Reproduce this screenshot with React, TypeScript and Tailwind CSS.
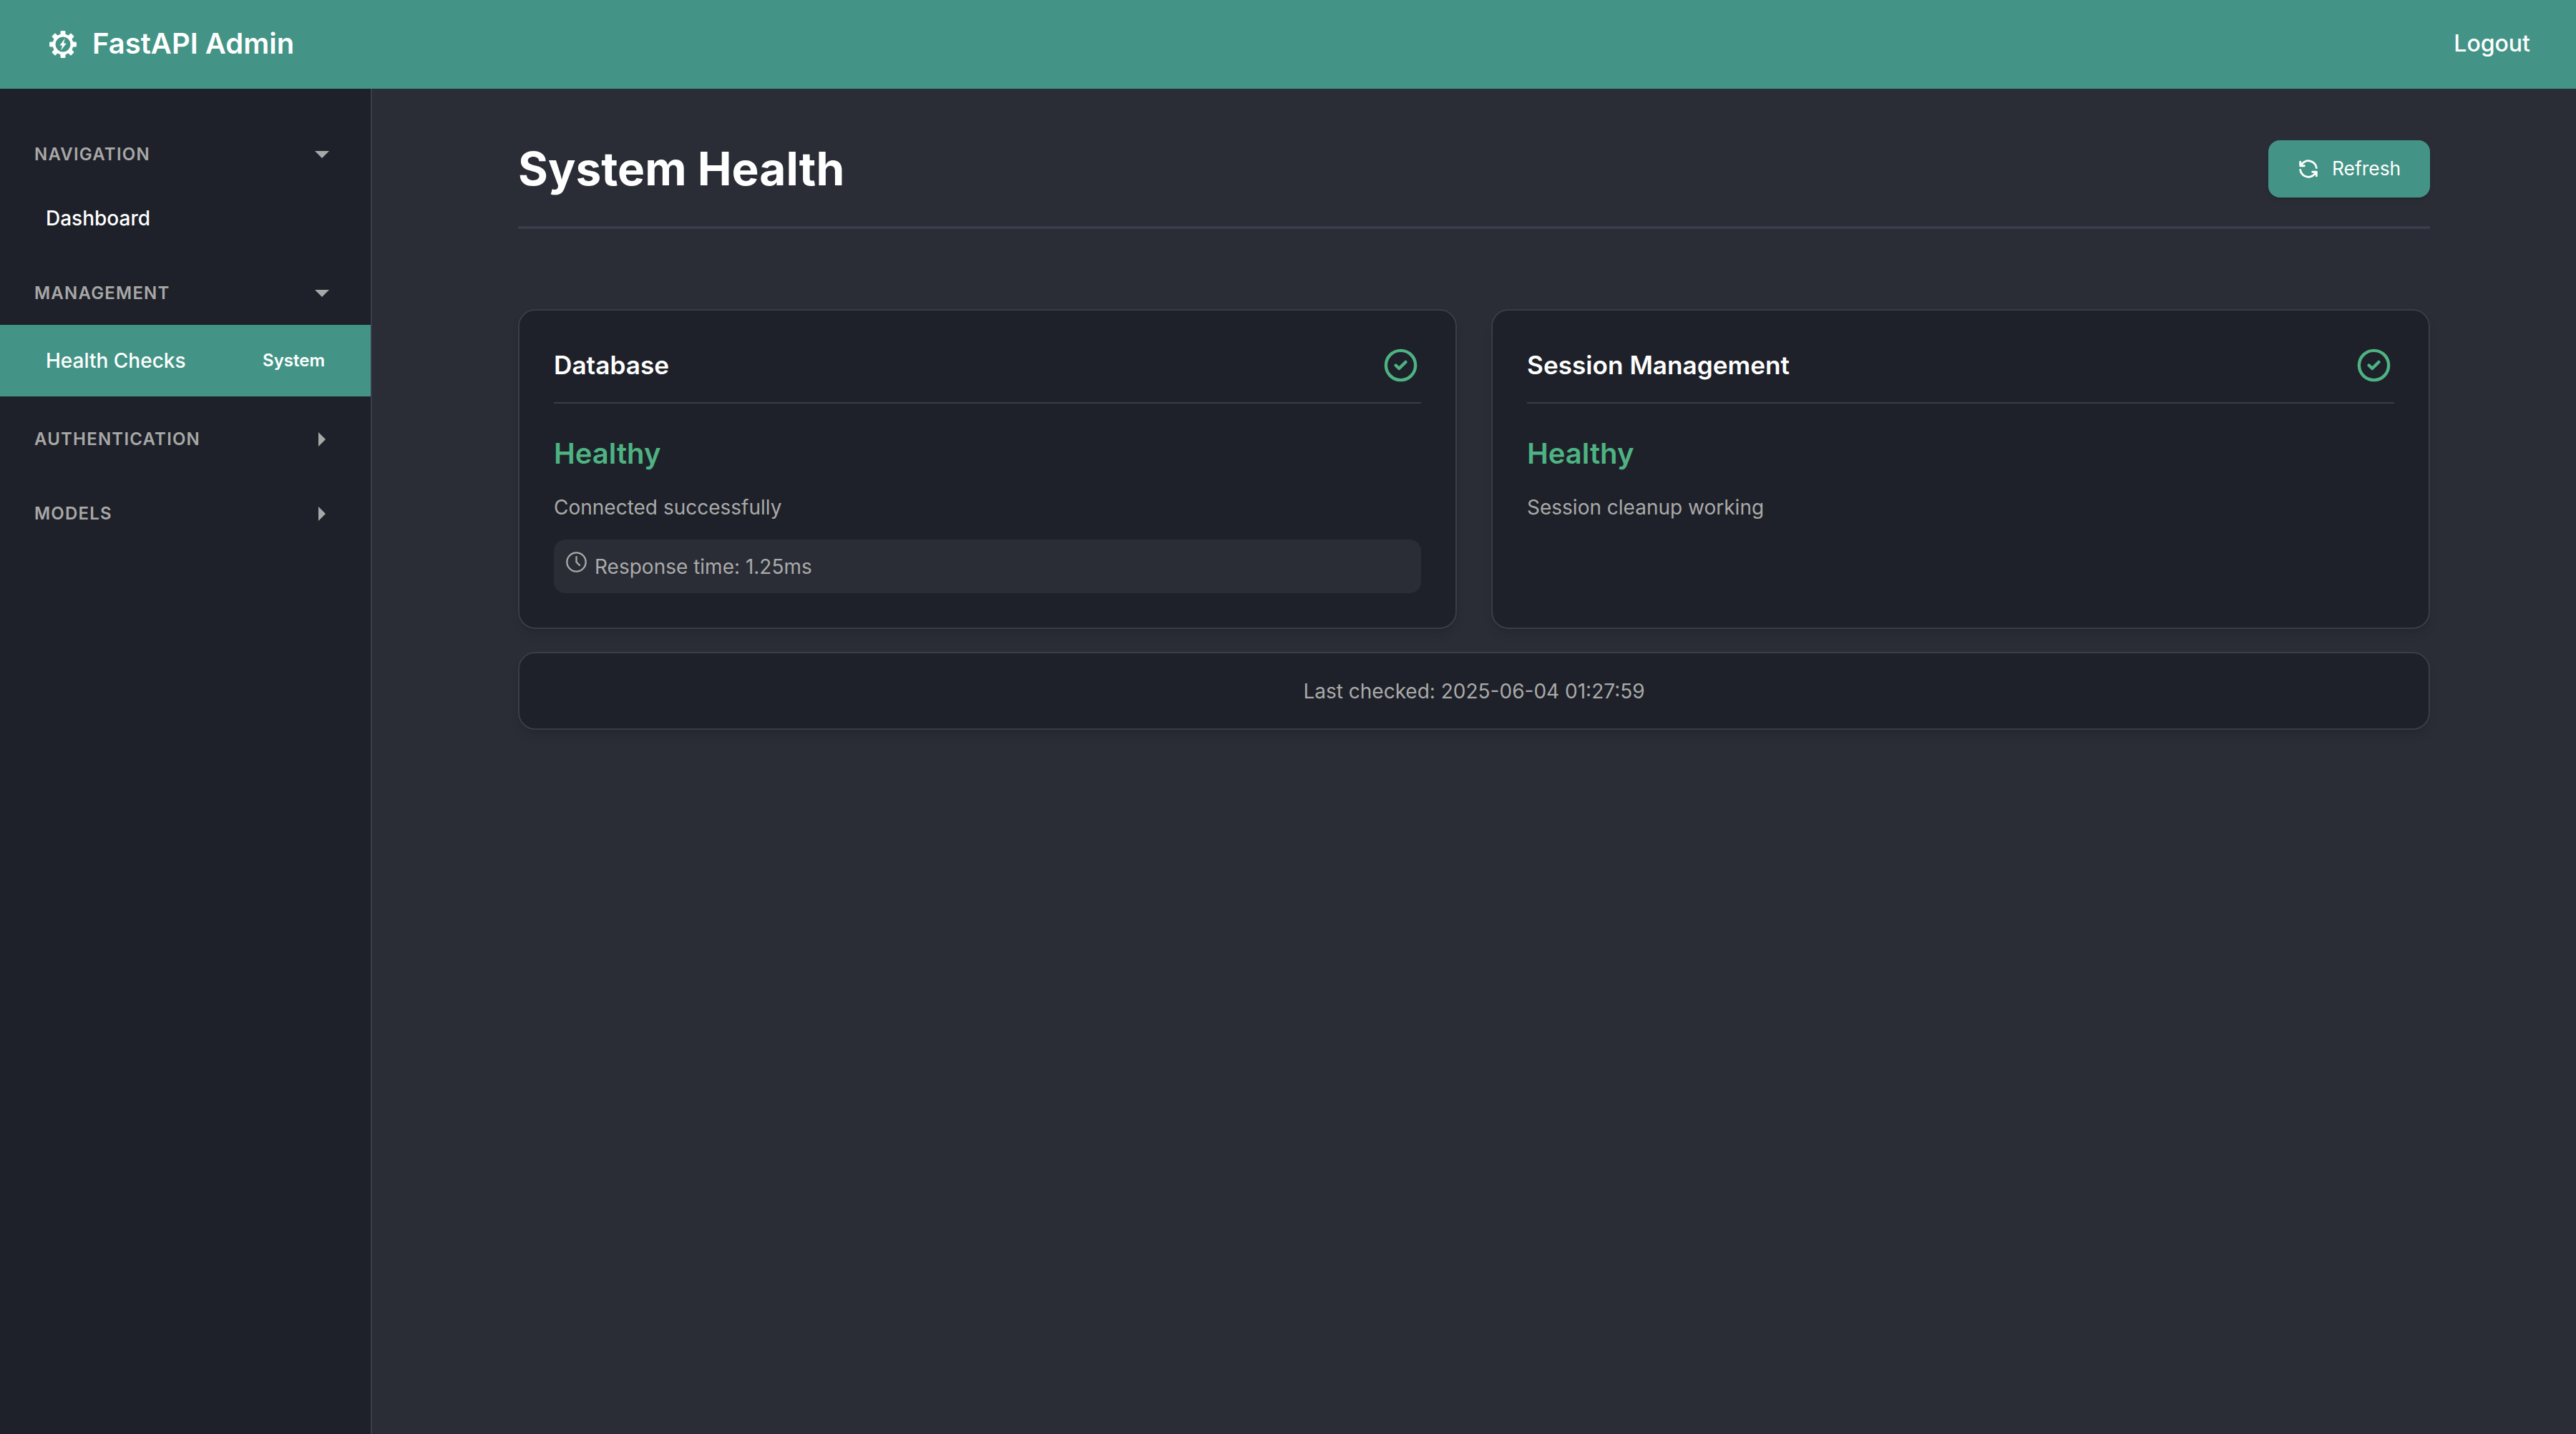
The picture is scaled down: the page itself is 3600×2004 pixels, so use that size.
import { TbCircleCheck, TbClock, TbRefresh } from "react-icons/tb";

function LogoIcon() {
  return (
    <svg viewBox="0 0 38 38" className="w-[38px] h-[38px] shrink-0" fill="none">
      <g fill="#fff">
        {[0, 45, 90, 135, 180, 225, 270, 315].map((a) => (
          <rect key={a} x="15.5" y="0" width="7" height="7" rx="1.5" transform={`rotate(${a} 19 19)`} />
        ))}
      </g>
      <circle cx="19" cy="19" r="12.5" stroke="#fff" strokeWidth="4" />
      <path d="M21.8 10.5 L14.5 20.5 H18 L16.2 27.5 L23.8 17.5 H20 Z" fill="#fff" />
    </svg>
  );
}

function SectionHead({ label, open }: { label: string; open: boolean }) {
  return (
    <div className="flex h-[60px] items-center justify-between pl-[48px] pr-[58px]">
      <span className="text-[24px] font-semibold tracking-[1.2px] text-[#a8a8a8]">{label}</span>
      {open ? (
        <span className="h-0 w-0 border-x-[10px] border-t-[10px] border-x-transparent border-t-[#a8a8a8]" />
      ) : (
        <span className="mr-[5px] h-0 w-0 border-y-[10px] border-l-[10px] border-y-transparent border-l-[#a8a8a8]" />
      )}
    </div>
  );
}

function Card({ title, message, time }: { title: string; message: string; time?: string }) {
  return (
    <div className="rounded-[24px] border-2 border-[#3a3d4a] bg-[#1e2129] p-[48px] shadow-lg">
      <div className="flex h-[82px] items-center justify-between border-b-2 border-[#3a3d4a] pb-[26px]">
        <h3 className="translate-y-[1px] text-[35.2px] font-semibold text-white">{title}</h3>
        <TbCircleCheck size={55} strokeWidth={1.9} className="mr-[1px] translate-y-[1px] text-[#4eb383]" />
      </div>
      <div className="mt-[40px] text-[40px] leading-[60px] font-semibold text-[#4eb383]">Healthy</div>
      <p className="mt-[24px] text-[28px] leading-[42px] text-[#aaaaaa]">{message}</p>
      {time && (
        <div className="mt-[24px] flex h-[75px] items-center gap-[8px] rounded-[16px] bg-[#2a2d35] px-[14px] text-[28px] text-[#aaaaaa]">
          <TbClock size={35} strokeWidth={1.6} className="-mt-[12px]" />
          <span>{time}</span>
        </div>
      )}
    </div>
  );
}

export default function App() {
  return (
    <div className="flex h-[2004px] flex-col bg-[#2a2d35] font-['Inter',sans-serif]">
      <header className="flex h-[124px] shrink-0 items-center justify-between bg-[#439486] pl-[69px] pr-[64px] text-white">
        <div className="flex items-center gap-[22px]">
          <LogoIcon />
          <span className="-mt-[2px] text-[40px] font-semibold">FastAPI Admin</span>
        </div>
        <a className="-mt-[2px] text-[32px] font-medium">Logout</a>
      </header>

      <div className="flex min-h-0 flex-1">
        <aside className="w-[520px] shrink-0 border-r-2 border-[#3a3d4a] bg-[#1e2129] pt-[62px]">
          <SectionHead label="NAVIGATION" open />
          <div className="mt-[9px] flex h-[100px] items-center pl-[64px] text-[28px] font-medium text-white">Dashboard</div>
          <div className="mt-[25px]">
            <SectionHead label="MANAGEMENT" open />
          </div>
          <div className="mt-[14px] flex h-[100px] items-center justify-between bg-[#439486] pl-[64px] pr-[64px] text-white">
            <span className="text-[28px] font-medium">Health Checks</span>
            <span className="text-[24px] font-semibold">System</span>
          </div>
          <div className="mt-[30px]">
            <SectionHead label="AUTHENTICATION" open={false} />
          </div>
          <div className="mt-[44px]">
            <SectionHead label="MODELS" open={false} />
          </div>
        </aside>

        <main className="flex-1 px-[204px] pt-[64px]">
          <div className="flex items-center justify-between border-b-[4px] border-[#3a3d4a] pb-[32px]">
            <h1 className="text-[64px] font-bold text-white">System Health</h1>
            <button className="flex h-[80px] w-[226px] items-center gap-[16px] rounded-[16px] bg-[#439486] pl-[39px] text-[26.4px] font-normal text-white shadow-md">
              <TbRefresh size={34} strokeWidth={2} />
              Refresh
            </button>
          </div>

          <div className="mt-[112px] grid grid-cols-2 gap-[48px]">
            <Card title="Database" message="Connected successfully" time="Response time: 1.25ms" />
            <Card title="Session Management" message="Session cleanup working" />
          </div>

          <div className="mt-[32px] flex h-[109px] items-center justify-center rounded-[24px] border-2 border-[#3a3d4a] bg-[#1e2129] text-[28px] text-[#aaaaaa] shadow-lg">
            Last checked: 2025-06-04 01:27:59
          </div>
        </main>
      </div>
    </div>
  );
}
